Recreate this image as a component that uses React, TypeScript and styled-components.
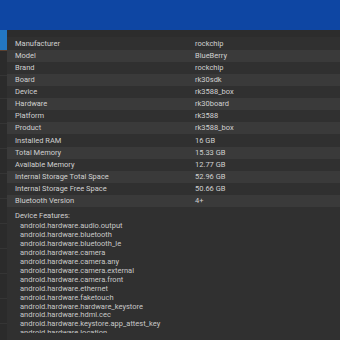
import React from 'react';
import styled, { createGlobalStyle, css } from 'styled-components';

const GlobalStyle = createGlobalStyle`
  html, body {
    margin: 0;
    padding: 0;
    background: #303030;
  }
  body {
    font-family: Roboto, "Noto Sans", sans-serif;
  }
`;

const Screen = styled.div`
  width: 340px;
  height: 340px;
  overflow: hidden;
  display: flex;
  flex-direction: column;
  background: #303030;
`;

const Header = styled.div`
  height: 30px;
  flex: none;
  background: #0e46a3;
`;

const Body = styled.div`
  flex: 1;
  display: flex;
  min-height: 0;
`;

const Sidebar = styled.div`
  width: 7px;
  flex: none;
  display: flex;
  flex-direction: column;
  background: #2b2b2b;
`;

const NavItem = styled.div<{ $active?: boolean; $h: number }>`
  height: ${p => p.$h}px;
  flex: none;
  border-bottom: 1px solid #353535;
  ${p =>
    p.$active &&
    css`
      background: #2377c2;
      border-bottom-color: #5a4030;
    `}
`;

const Main = styled.div`
  flex: 1;
  display: flex;
  flex-direction: column;
  background: #303030;
  box-shadow: inset 0 7px 0 #2c2c2c;
  padding: 7.6px 0 7px;
  min-height: 0;
`;

const ScrollArea = styled.div`
  flex: 1;
  overflow: hidden;
  min-height: 0;
`;

const Row = styled.div<{ $alt?: boolean }>`
  height: 12.12px;
  display: grid;
  grid-template-columns: 180px 1fr;
  align-items: center;
  padding-left: 8px;
  font-size: 7.5px;
  color: #d0d0d0;
  background: ${p => (p.$alt ? '#3a3a3a' : '#303030')};
`;

const Cell = styled.span`
  white-space: nowrap;
  line-height: 12px;
`;

const Features = styled.div`
  padding: 3.5px 0 0 8px;
  font-size: 7.5px;
  color: #d0d0d0;
`;

const FeaturesTitle = styled.div`
  line-height: 10px;
  margin-bottom: 1.8px;
`;

const FeatureItem = styled.div`
  padding-left: 5px;
  line-height: 8.9px;
  white-space: nowrap;
  color: #c8c8c8;
`;

const info: [string, string][] = [
  ['Manufacturer', 'rockchip'],
  ['Model', 'BlueBerry'],
  ['Brand', 'rockchip'],
  ['Board', 'rk30sdk'],
  ['Device', 'rk3588_box'],
  ['Hardware', 'rk30board'],
  ['Platform', 'rk3588'],
  ['Product', 'rk3588_box'],
  ['Installed RAM', '16 GB'],
  ['Total Memory', '15.33 GB'],
  ['Available Memory', '12.77 GB'],
  ['Internal Storage Total Space', '52.96 GB'],
  ['Internal Storage Free Space', '50.66 GB'],
  ['Bluetooth Version', '4+'],
];

const features = [
  'android.hardware.audio.output',
  'android.hardware.bluetooth',
  'android.hardware.bluetooth_le',
  'android.hardware.camera',
  'android.hardware.camera.any',
  'android.hardware.camera.external',
  'android.hardware.camera.front',
  'android.hardware.ethernet',
  'android.hardware.faketouch',
  'android.hardware.hardware_keystore',
  'android.hardware.hdmi.cec',
  'android.hardware.keystore.app_attest_key',
  'android.hardware.location',
];

const navHeights = [20, 24, 22, 24, 24, 24, 24, 24, 24, 24, 24, 24, 24];

export default function App() {
  return (
    <>
      <GlobalStyle />
      <Screen>
        <Header />
        <Body>
          <Sidebar>
            {navHeights.map((h, i) => (
              <NavItem key={i} $h={h} $active={i === 0} />
            ))}
          </Sidebar>
          <Main>
            <ScrollArea>
              {info.map(([k, v], i) => (
                <Row key={k} $alt={i % 2 === 1}>
                  <Cell>{k}</Cell>
                  <Cell>{v}</Cell>
                </Row>
              ))}
              <Features>
                <FeaturesTitle>Device Features:</FeaturesTitle>
                {features.map(f => (
                  <FeatureItem key={f}>{f}</FeatureItem>
                ))}
              </Features>
            </ScrollArea>
          </Main>
        </Body>
      </Screen>
    </>
  );
}
